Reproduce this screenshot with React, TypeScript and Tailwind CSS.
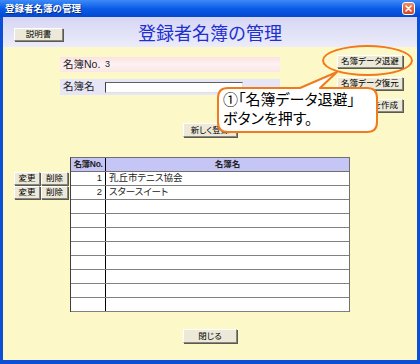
import clsx from 'clsx';

const FONT = "font-['Liberation_Sans','Noto_Sans_CJK_JP',sans-serif]";

function XpButton({ label, className }: { label: string; className?: string }) {
  return (
    <button
      className={clsx(
        'flex items-center justify-center bg-[#ece9d8] border border-t-white border-l-white border-r-[#8a887c] border-b-[#8a887c] shadow-[1px_1px_0_#5a5a52] text-[8.5px] leading-none text-black [font-feature-settings:"palt"] whitespace-nowrap overflow-hidden',
        className
      )}
    >
      {label}
    </button>
  );
}

const rows = [
  { no: '1', name: '孔丘市テニス協会' },
  { no: '2', name: 'スタースイート' },
  ...Array.from({ length: 8 }, () => ({ no: '', name: '' })),
];

export default function App() {
  return (
    <div className={clsx('relative w-[420px] h-[364px] overflow-hidden flex flex-col bg-[#0b4fd6]', FONT)}>
      {/* title bar */}
      <div className="h-[17px] flex items-center justify-between pl-[5px] pr-[5px] bg-gradient-to-b from-[#3d8af7] via-[#0a5ce6] to-[#0348d0]">
        <span className="text-white text-[9.5px] font-bold leading-none [text-shadow:1px_1px_0_#0a2a80]">登録者名簿の管理</span>
        <div className="w-[13px] h-[13px] rounded-[3px] border border-white bg-gradient-to-b from-[#f08a64] to-[#d4451e] flex items-center justify-center">
          <svg width="7" height="7" viewBox="0 0 7 7">
            <path d="M1 1L6 6M6 1L1 6" stroke="white" strokeWidth="1.6" strokeLinecap="round" />
          </svg>
        </div>
      </div>

      <div className="flex-1 flex flex-col mx-[3px] mb-[4px]">
        {/* header band */}
        <div className="h-[30px] grid grid-cols-[1fr_auto_1fr] items-start bg-gradient-to-b from-[#d6d6f4] to-[#ececfa]">
          <XpButton label="説明書" className="ml-[11px] mt-[11px] w-[49px] h-[13px]" />
          <div className="mt-[7px] text-[18px] leading-[20px] text-[#2030d0] font-['Liberation_Serif','Noto_Sans_CJK_JP',serif]">
            登録者名簿の管理
          </div>
          <div />
        </div>

        {/* body */}
        <div className="flex-1 flex flex-col bg-[#fcf8c8]">
          <div className="h-[76px] flex justify-between items-start pt-[8px] pl-[57px] pr-[14px]">
            <div className="flex flex-col gap-[7px] mt-[2px] w-[220px]">
              <div className="h-[15px] flex items-center pl-[3px] bg-gradient-to-b from-[#fbe2e2] via-[#fdf2f2] to-[#fbe6e6] text-[10.5px] text-[#222]">
                <span className="w-[42px] whitespace-nowrap">名簿No.</span>
                <span className="text-[9px]">3</span>
              </div>
              <div className="h-[16px] flex items-center pl-[3px] bg-[#e6e6f6] text-[10.5px] text-[#222]">
                <span className="w-[42px]">名簿名</span>
                <div className="w-[138px] h-[11px] bg-white border border-t-[#606060] border-l-[#404040] border-r-[#e0e0e0] border-b-[#e0e0e0]" />
              </div>
            </div>
            <div className="flex flex-col gap-[9px]">
              <XpButton label="名簿データ退避" className="w-[66px] h-[13px]" />
              <XpButton label="名簿データ復元" className="w-[66px] h-[13px]" />
              <XpButton label="名簿を作成" className="w-[66px] h-[13px] !justify-end pr-[4px]" />
            </div>
          </div>

          <div className="flex justify-center">
            <XpButton label="新しく登録" className="w-[54px] h-[14px]" />
          </div>

          {/* list */}
          <div className="mt-[20px] flex pl-[11px]">
            <div className="w-[56px] flex flex-col pt-[15px]">
              {['1', '2'].map(k => (
                <div key={k} className="h-[14px] flex gap-[1px]">
                  <XpButton label="変更" className="w-[26px] h-[13px]" />
                  <XpButton label="削除" className="w-[27px] h-[13px]" />
                </div>
              ))}
            </div>
            <div className="w-[280px] border-l border-l-[#404040] border-r border-r-[#707070] border-t border-t-[#707070] bg-white text-[9.5px] text-[#222]">
              <div className="h-[14px] flex bg-[#c6c6f6] border-b border-[#707070] font-bold text-[8.5px] whitespace-nowrap [font-feature-settings:'palt']">
                <div className="w-[35px] border-r border-black flex items-center justify-center tracking-[-0.3px]">名簿No.</div>
                <div className="flex-1 flex items-center justify-center">名簿名</div>
              </div>
              {rows.map((r, i) => (
                <div key={i} className="h-[14px] flex border-b border-[#808080]">
                  <div className="w-[35px] border-r border-black flex items-center justify-end pr-[3px]">{r.no}</div>
                  <div className="flex-1 flex items-center pl-[3px] [font-feature-settings:'palt']">{r.name}</div>
                </div>
              ))}
            </div>
          </div>

          <div className="mt-[17px] flex justify-center">
            <XpButton label="閉じる" className="w-[54px] h-[14px]" />
          </div>
        </div>
      </div>

      {/* highlight ring */}
      <div className="absolute left-[322px] top-[45px] w-[91px] h-[31px] rounded-[50%] border-2 border-[#f07a1c]" />

      {/* callout */}
      <div className="absolute left-[216px] top-[70px] w-[164px] h-[64px]">
        <svg className="absolute inset-0" width="164" height="64" viewBox="0 0 164 64">
          <path
            d="M12 18 H84 L121 2 L104 18 H151 Q161 18 161 28 V52 Q161 62 151 62 H12 Q2 62 2 52 V28 Q2 18 12 18 Z"
            fill="white"
            stroke="#f07a1c"
            strokeWidth="2"
            strokeLinejoin="round"
          />
        </svg>
        <div className="absolute left-[7px] top-[20px] text-[15px] leading-[19px] text-black [font-feature-settings:'palt'] whitespace-nowrap">
          <div>①「名簿データ退避」</div>
          <div>ボタンを押す。</div>
        </div>
      </div>
    </div>
  );
}
